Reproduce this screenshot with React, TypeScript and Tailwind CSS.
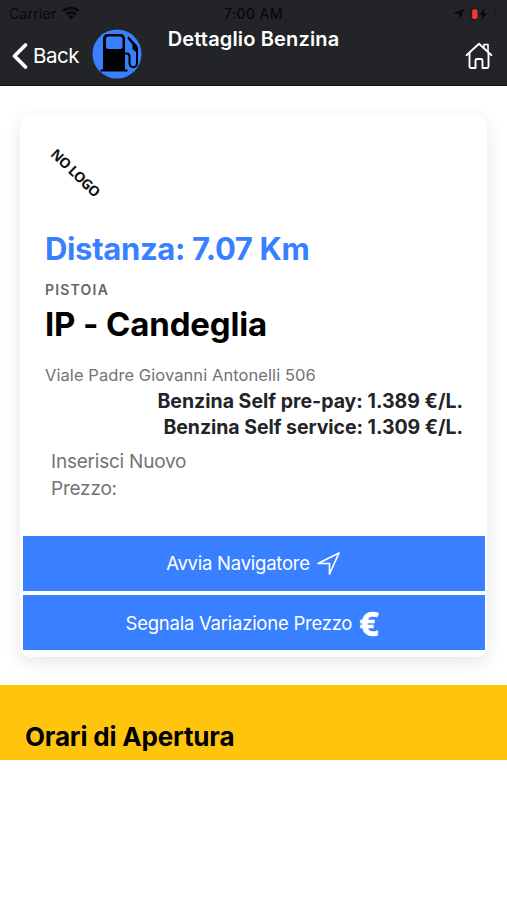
import React from 'react';

function StatusBar() {
  return (
    <div className="grid h-7 grid-cols-3 items-center text-[14px] leading-7 text-[#08090a]">
      <div className="flex items-center gap-[6px] pl-[9px]">
        <span className="tracking-[0.2px]">Carrier</span>
        <svg className="-mt-[2px]" width="18" height="14" viewBox="0 0 18 14" fill="none" stroke="currentColor" strokeWidth="2.5">
          <path d="M1 5.2a11.6 11.6 0 0 1 16 0" />
          <path d="M3.9 8.5a7.4 7.4 0 0 1 10.2 0" />
          <path d="M9 13.5 6.1 10.5a4.3 4.3 0 0 1 5.8 0z" fill="currentColor" stroke="none" />
        </svg>
      </div>
      <div className="text-center font-medium tracking-[0.4px]">7:00 AM</div>
      <div className="flex items-center justify-end gap-[5px] pr-[8px]">
        <svg width="12" height="12" viewBox="0 0 12 12" fill="currentColor">
          <path d="M11.8.2 6.8 11.8 6.300 6.200.2 5.500z" />
        </svg>
        <svg className="-mt-px" width="29" height="14" viewBox="0 0 29 14" fill="none">
          <rect x="1" y="1" width="24" height="12" rx="3.5" stroke="#1a1c1f" strokeWidth="1.2" />
          <rect x="2.2" y="2.2" width="5.2" height="9.8" rx="1.8" fill="#f5372f" />
          <path d="M14.500 1.600 9.300 7.800h3L11.100 12.400 16.900 6.200h-3.200z" fill="#050505" />
          <path d="M27 5v4c1-.4 1.400-1.200 1.400-2S28 5.400 27 5z" fill="#1a1c1f" />
        </svg>
      </div>
    </div>
  );
}

function FuelIcon() {
  return (
    <svg width="50" height="50" viewBox="0 0 50 50" fill="none">
      <circle cx="25" cy="25" r="24.500" fill="#3880ff" />
      <path d="M8.500 42.500v-2h2.500V9.500A4.500 4.500 0 0 1 15.500 5h13A4.500 4.500 0 0 1 33 9.500v31h2.500v2z" fill="#030303" />
      <rect x="14" y="7.500" width="16.500" height="12.500" rx="2.500" fill="#3880ff" />
      <path d="M33 24.500h1.500a3 3 0 0 1 3 3V34c0 5.500 7.500 5.500 7.500 0V20L37 9.500" stroke="#030303" strokeWidth="2" />
      <path d="m35.300 9 1.400-1.500 8.600 9.200.7 3.300v4.500l-5.500-4.300v-5z" fill="#030303" />
    </svg>
  );
}

function HomeIcon() {
  return (
    <svg width="28" height="28" viewBox="0 0 28 28" fill="none" stroke="#fff" strokeWidth="1.900" strokeLinecap="round" strokeLinejoin="round">
      <path d="M1.500 13.200 14 1.700l12.500 11.500" />
      <path d="M4.500 11v13.500c0 1 .5 1.500 1.500 1.500h4.500v-7.500c0-1 .5-1.500 1.500-1.500h4c1 0 1.500.5 1.500 1.500V26H22c1 0 1.500-.5 1.500-1.500V11" />
      <path d="M19 5V2.500h4v7" strokeWidth="1.600" />
    </svg>
  );
}

export default function App() {
  return (
    <div className="h-[900px] w-[507px] overflow-hidden bg-white font-['Inter','Liberation_Sans',sans-serif] whitespace-nowrap">
      <header className="h-[86px] border-b border-[#111214] bg-[#222428]">
        <StatusBar />
        <div className="grid h-[57px] grid-cols-[150px_1fr_150px] text-white">
          <div className="flex pl-3">
            <svg className="mt-[14px]" width="16" height="28" viewBox="0 0 16 28" fill="none" stroke="#fff" strokeWidth="3.700" strokeLinecap="round" strokeLinejoin="round">
              <path d="M13.500 3 2.500 14l11 11" />
            </svg>
            <span className="mt-[14px] ml-[5px] w-[48px] text-[20.500px] leading-7 tracking-[-0.5px]">Back</span>
            <div className="ml-[10.500px] pt-[0.500px]"><FuelIcon /></div>
          </div>
          <h1 className="text-center text-[20px] leading-[22px] font-semibold tracking-[0.15px]">Dettaglio Benzina</h1>
          <div className="flex justify-end pt-[14px] pr-[14px]"><HomeIcon /></div>
        </div>
      </header>

      <main className="pt-[29px]">
        <section className="mx-5 flex h-[542px] flex-col rounded-[10px] bg-white pr-[2px] pl-[3px] shadow-[0_5px_18px_rgba(0,0,0,0.10)]">
          <div className="px-[22px]">
            <div className="flex h-[115px] w-[61px] items-center justify-center">
              <span className="rotate-[44deg] font-['Open_Sans'] text-[14px] font-bold tracking-[-0.7px] text-[#111]">NO LOGO</span>
            </div>
            <p className="h-[38px] text-[31px] leading-[38px] font-bold tracking-[-0.34px] text-[#3880ff]">Distanza: 7.07 Km</p>
            <p className="mt-[12px] h-5 text-[14px] leading-5 font-semibold tracking-[1.2px] text-[#666]">PISTOIA</p>
            <h2 className="mt-[4px] h-[40px] text-[33px] leading-[40px] font-bold tracking-[-0.15px] text-black">IP - Candeglia</h2>
            <p className="mt-[21px] h-5 text-[16.500px] leading-5 tracking-[0.07px] text-[#737373]">Viale Padre Giovanni Antonelli 506</p>
            <div className="mt-[4px] text-right text-[19.500px] leading-[25.500px] font-bold text-[#222428]">
              <p>Benzina Self pre-pay: 1.389 €/L.</p>
              <p className="tracking-[-0.050px]">Benzina Self service: 1.309 €/L.</p>
            </div>
            <p className="mt-[8px] ml-[6px] text-[19px] leading-[27px] tracking-[-0.22px] text-[#737373]">
              Inserisci Nuovo<br />Prezzo:
            </p>
          </div>
          <div className="mt-auto mb-[7px] flex flex-col gap-[4px] text-[18.500px] tracking-[-0.24px] text-white">
            <button className="flex h-[55px] items-center justify-center gap-[7px] bg-[#3880ff] pr-[2px]">
              <span className="pt-px">Avvia Navigatore</span>
              <svg width="23" height="23" viewBox="0 0 23 23" fill="none" stroke="#fff" strokeWidth="1.700" strokeLinejoin="round">
                <path d="M22 1 12.500 22V11.500H1z" />
              </svg>
            </button>
            <button className="flex h-[55px] items-center justify-center gap-[7px] bg-[#3880ff] pr-[4px]">
              <span className="pt-[2px]">Segnala Variazione Prezzo</span>
              <span className="font-['Open_Sans'] text-[34px] leading-[40px] font-bold [-webkit-text-stroke:0.5px_white]">€</span>
            </button>
          </div>
        </section>

        <section className="mt-[28px] h-[75px] bg-[#ffc40c] pt-[36px] pl-[25px]">
          <h2 className="text-[26px] leading-[32px] font-bold tracking-[-0.18px] text-black">Orari di Apertura</h2>
        </section>
      </main>
    </div>
  );
}
